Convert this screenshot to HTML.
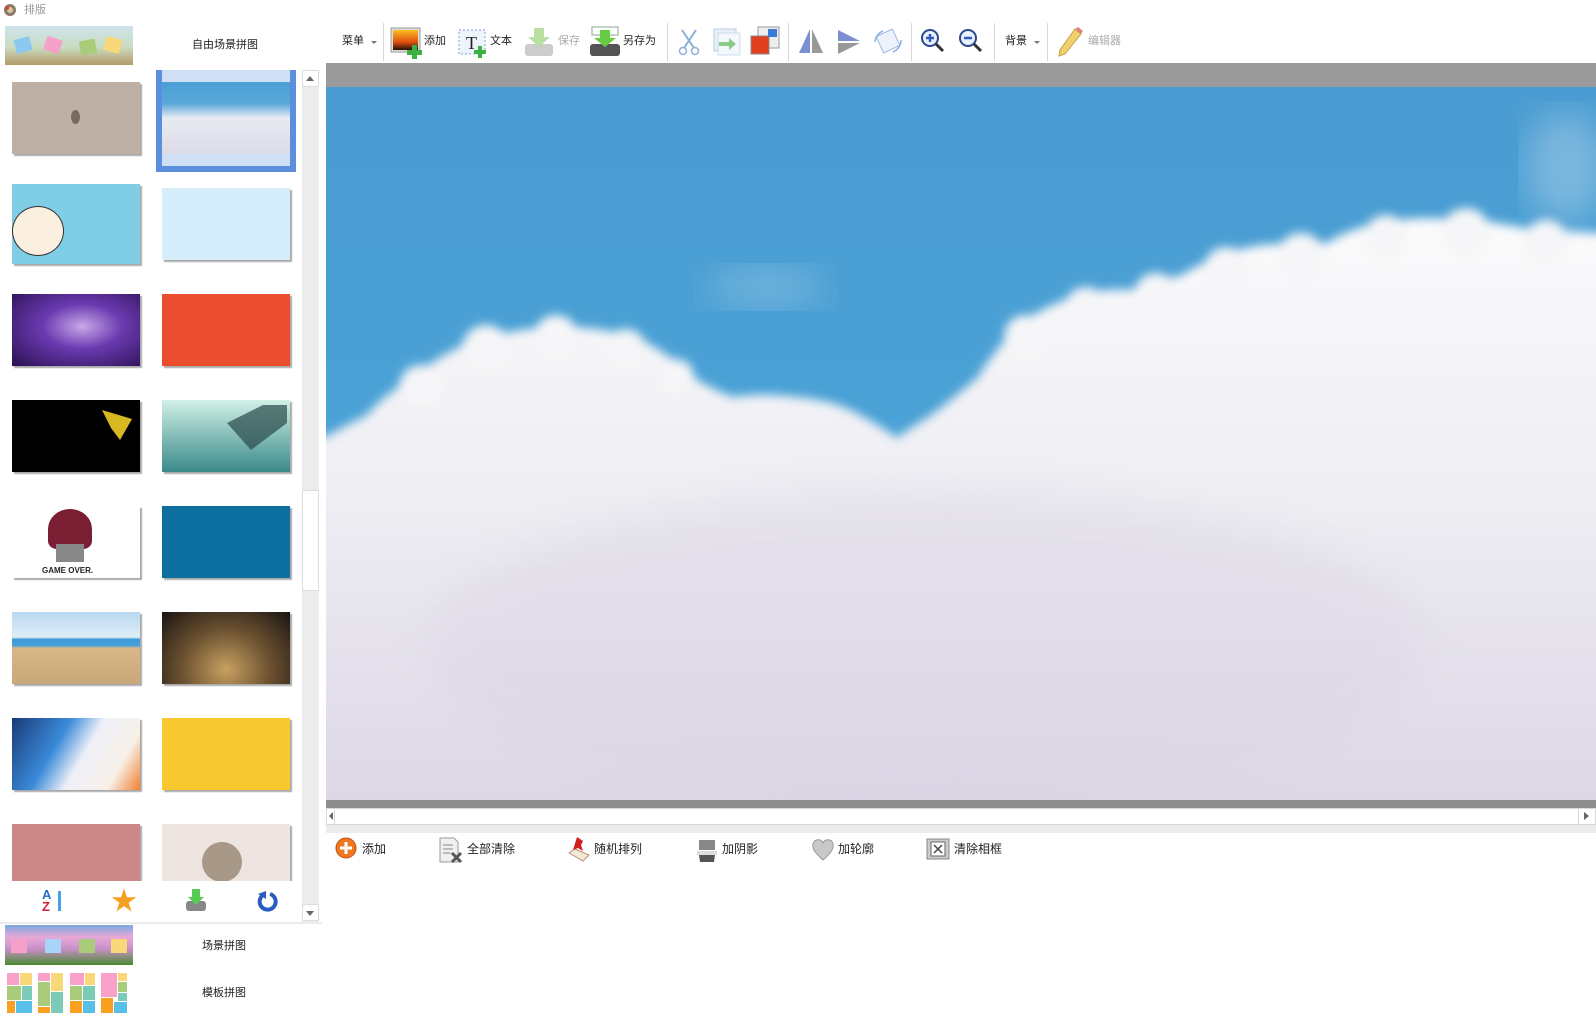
<!DOCTYPE html>
<html><head><meta charset="utf-8">
<style>
*{margin:0;padding:0;box-sizing:border-box}
body{width:1596px;height:1015px;overflow:hidden;background:#fff;position:relative;font-family:"Liberation Sans","Noto Sans CJK SC",sans-serif;font-size:12px;color:#222}
.a{position:absolute}
.t{position:absolute;white-space:nowrap;line-height:14px;font-size:12px}
.th{position:absolute;width:128px;height:72px;box-shadow:2px 2px 1px #aaa}
.sep{position:absolute;top:23px;width:1px;height:38px;background:#d8d8d8}
</style></head><body>

<svg class="a" style="left:2px;top:2px" width="16" height="16"><circle cx="8" cy="8" r="6" fill="#8a7a6a"/><circle cx="8" cy="8" r="3" fill="#d9c9a0"/><circle cx="5" cy="6" r="2" fill="#c44"/></svg>
<div class="t" style="left:24px;top:3px;color:#999;font-size:11px">排版</div>

<div class="a" style="left:5px;top:26px;width:128px;height:39px;background:linear-gradient(#cfe4ee,#c9dcc0 55%,#b49a6a);overflow:hidden">
 <div class="a" style="left:10px;top:12px;width:16px;height:14px;background:#8cc8ef;transform:rotate(-15deg)"></div>
 <div class="a" style="left:40px;top:12px;width:16px;height:14px;background:#f4a0c8;transform:rotate(20deg)"></div>
 <div class="a" style="left:75px;top:14px;width:16px;height:14px;background:#a8cc7a;transform:rotate(-10deg)"></div>
 <div class="a" style="left:100px;top:12px;width:16px;height:14px;background:#f8d878;transform:rotate(15deg)"></div>
</div>
<div class="t" style="left:192px;top:38px;font-size:11px">自由场景拼图</div>

<div class="a" style="left:156px;top:70px;width:140px;height:102px;background:#5b8fdd"></div>
<div class="a" style="left:162px;top:70px;width:128px;height:96px;background:#cfdff5"></div>
<div class="a" style="left:162px;top:82px;width:128px;height:72px;background:linear-gradient(#4a9fd4 0%,#5aa8da 30%,#e8eaf2 50%,#dcdce8);"></div>

<div class="th" style="left:12px;top:82px;background:#bfb0a6"><div class="a" style="left:59px;top:28px;width:9px;height:14px;border-radius:50%;background:#7a6a5e"></div></div>
<div class="th" style="left:12px;top:184px;height:80px;background:#80cde6"><div class="a" style="left:0;top:22px;width:52px;height:50px;border-radius:50%;background:#fbefe0;border:1px solid #333"></div></div>
<div class="th" style="left:162px;top:188px;background:#d6eefb"></div>
<div class="th" style="left:12px;top:294px;background:radial-gradient(ellipse at 55% 45%,#c8a8e8,#6a3ab0 40%,#2a1050)"></div>
<div class="th" style="left:162px;top:294px;background:#ea4e2e"></div>
<div class="th" style="left:12px;top:400px;background:#000"><div class="a" style="left:90px;top:10px;width:30px;height:30px;background:#d8b820;clip-path:polygon(0 0,100% 30%,60% 100%,30% 60%)"></div></div>
<div class="th" style="left:162px;top:400px;background:linear-gradient(#d0f0e6,#3a8a8a)"><div class="a" style="left:65px;top:5px;width:60px;height:45px;background:#2a4a4a;opacity:.7;clip-path:polygon(0 40%,60% 0,100% 0,100% 40%,40% 100%)"></div></div>
<div class="th" style="left:12px;top:506px;background:#fff"><div class="a" style="left:36px;top:3px;width:44px;height:40px;border-radius:50% 50% 20% 20%;background:#7a1e34"></div><div class="a" style="left:44px;top:38px;width:28px;height:18px;background:#888"></div><div class="t" style="left:30px;top:58px;font-size:8px;font-weight:bold">GAME OVER.</div></div>
<div class="th" style="left:162px;top:506px;background:#0d6ea0"></div>
<div class="th" style="left:12px;top:612px;background:linear-gradient(#b8d8f0,#e0eef8 35%,#3a9ad8 38%,#4aa0d8 47%,#d8b888 50%,#c8a878)"></div>
<div class="th" style="left:162px;top:612px;background:radial-gradient(ellipse at 50% 80%,#c8a060,#6a5030 50%,#1a1410)"></div>
<div class="th" style="left:12px;top:718px;background:linear-gradient(120deg,#1a3a78 0%,#3a8ad8 35%,#eef0f8 55%,#f8f0e8 80%,#f08030)"></div>
<div class="th" style="left:162px;top:718px;background:#f7c830"></div>
<div class="th" style="left:12px;top:824px;height:57px;background:#cc8888"></div>
<div class="th" style="left:162px;top:824px;height:57px;background:#eee4e0"><div class="a" style="left:40px;top:18px;width:40px;height:40px;border-radius:50%;background:#a89888"></div></div>
<div class="a" style="left:0;top:881px;width:300px;height:40px;background:#fff"></div>

<div class="t" style="left:42px;top:889px;font-size:13px;font-weight:bold;color:#2a6ac8;line-height:12px">A<br><span style="color:#d02040">Z</span></div>
<div class="a" style="left:58px;top:891px;width:3px;height:20px;background:#4aa0e8"></div>
<div class="t" style="left:111px;top:887px;font-size:26px;color:#f5a020;line-height:28px">★</div>
<svg class="a" style="left:184px;top:887px" width="24" height="26"><rect x="2" y="14" width="20" height="10" rx="3" fill="#888"/><path d="M8 2h8v8h4l-8 8-8-8h4z" fill="#5c5"/></svg>
<svg class="a" style="left:256px;top:890px" width="24" height="22"><path d="M6 6 A8 8 0 1 0 14 4" fill="none" stroke="#2a5cc0" stroke-width="4"/><path d="M2 4l8-3 0 8z" fill="#2a5cc0"/></svg>

<div class="a" style="left:302px;top:70px;width:17px;height:852px;background:#ececec"></div>
<div class="a" style="left:302px;top:70px;width:17px;height:17px;background:#fff;border:1px solid #ddd"></div>
<div class="a" style="left:306px;top:76px;border:4px solid transparent;border-bottom:5px solid #666;border-top:0"></div>
<div class="a" style="left:302px;top:490px;width:17px;height:101px;background:#fff;border:1px solid #ddd"></div>
<div class="a" style="left:302px;top:904px;width:17px;height:17px;background:#fff;border:1px solid #ddd"></div>
<div class="a" style="left:306px;top:911px;border:4px solid transparent;border-top:5px solid #666;border-bottom:0"></div>
<div class="a" style="left:0;top:922px;width:322px;height:2px;background:#ececec"></div>

<div class="a" style="left:5px;top:925px;width:128px;height:40px;background:linear-gradient(#7aa8e0,#e8a8d8 30%,#c890c8 60%,#4a8a30)"><div class="a" style="left:6px;top:14px;width:16px;height:14px;background:#f4a0c8"></div><div class="a" style="left:40px;top:14px;width:16px;height:14px;background:#a8d4f8"></div><div class="a" style="left:74px;top:14px;width:16px;height:14px;background:#a8cc7a"></div><div class="a" style="left:106px;top:14px;width:16px;height:14px;background:#f8d878"></div></div>
<div class="t" style="left:202px;top:939px;font-size:11px">场景拼图</div>
<svg class="a" style="left:7px;top:973px" width="124" height="40">
<g><rect x="0" y="0" width="12" height="12" fill="#f8a0c8"/><rect x="13" y="0" width="12" height="12" fill="#f8d878"/><rect x="0" y="13" width="14" height="14" fill="#a8cc7a"/><rect x="15" y="13" width="10" height="14" fill="#7ccab8"/><rect x="0" y="28" width="8" height="12" fill="#f8a020"/><rect x="9" y="28" width="16" height="12" fill="#58c0e8"/></g>
<g transform="translate(31,0)"><rect x="0" y="0" width="12" height="8" fill="#f8a0c8"/><rect x="13" y="0" width="12" height="18" fill="#f8d878"/><rect x="0" y="9" width="12" height="24" fill="#a8cc7a"/><rect x="13" y="19" width="12" height="21" fill="#7ccab8"/><rect x="0" y="34" width="12" height="6" fill="#f8a020"/></g>
<g transform="translate(63,0)"><rect x="0" y="0" width="14" height="12" fill="#f8a0c8"/><rect x="15" y="0" width="10" height="12" fill="#f8d878"/><rect x="0" y="13" width="12" height="14" fill="#a8cc7a"/><rect x="13" y="13" width="12" height="14" fill="#7ccab8"/><rect x="0" y="28" width="12" height="12" fill="#f8a020"/><rect x="13" y="28" width="12" height="12" fill="#58c0e8"/></g>
<g transform="translate(94,0)"><rect x="0" y="0" width="16" height="24" fill="#f8a0c8"/><rect x="17" y="0" width="9" height="8" fill="#f8d878"/><rect x="17" y="9" width="9" height="10" fill="#a8cc7a"/><rect x="17" y="20" width="9" height="8" fill="#7ccab8"/><rect x="0" y="25" width="12" height="15" fill="#f8a020"/><rect x="13" y="29" width="13" height="11" fill="#58c0e8"/></g>
</svg>
<div class="t" style="left:202px;top:986px;font-size:11px">模板拼图</div>

<div class="t" style="left:342px;top:34px;font-size:11px">菜单</div>
<div class="a" style="left:371px;top:41px;border:3px solid transparent;border-top:3px solid #777"></div>
<div class="sep" style="left:383px"></div>
<svg class="a" style="left:390px;top:27px" width="34" height="32"><defs><linearGradient id="sun" x1="0" y1="0" x2="0" y2="1"><stop offset="0" stop-color="#f8c020"/><stop offset=".6" stop-color="#e05010"/><stop offset="1" stop-color="#201008"/></linearGradient></defs><rect x="1" y="1" width="29" height="24" fill="#ddd" stroke="#999"/><rect x="3" y="3" width="25" height="20" fill="url(#sun)"/><path d="M22 18h5v5h5v5h-5v5h-5v-5h-5v-5h5z" fill="#3cb043"/></svg>
<div class="t" style="left:424px;top:34px;font-size:11px">添加</div>
<svg class="a" style="left:457px;top:27px" width="32" height="32"><rect x="2" y="3" width="26" height="24" fill="#eef4fc" stroke="#7aa0d8" stroke-dasharray="2 2"/><text x="9" y="22" font-family="Liberation Serif" font-size="18" fill="#222">T</text><path d="M21 19h4v4h4v4h-4v4h-4v-4h-4v-4h4z" fill="#3cb043"/></svg>
<div class="t" style="left:490px;top:34px;font-size:11px">文本</div>
<svg class="a" style="left:524px;top:26px" width="30" height="32"><rect x="1" y="18" width="28" height="12" rx="3" fill="#ccc"/><path d="M10 2h10v9h6l-11 10-11-10h6z" fill="#b8e0a0"/></svg>
<div class="t" style="left:558px;top:34px;font-size:11px;color:#aaa">保存</div>
<svg class="a" style="left:589px;top:26px" width="32" height="32"><rect x="1" y="18" width="30" height="12" rx="3" fill="#555"/><rect x="3" y="1" width="26" height="8" fill="#fff" stroke="#8a8"/><path d="M11 4h10v8h6l-11 9-11-9h6z" fill="#6c4"/></svg>
<div class="t" style="left:623px;top:34px;font-size:11px">另存为</div>
<div class="sep" style="left:667px"></div>
<svg class="a" style="left:678px;top:28px" width="22" height="28"><path d="M4 2l12 18M18 2l-12 18" stroke="#8ab0d8" stroke-width="2"/><circle cx="5" cy="23" r="3.5" fill="none" stroke="#8ab0d8" stroke-width="1.5"/><circle cx="17" cy="23" r="3.5" fill="none" stroke="#8ab0d8" stroke-width="1.5"/></svg>
<svg class="a" style="left:713px;top:28px" width="28" height="28"><rect x="1" y="1" width="22" height="22" fill="#e8f0f8" stroke="#bcd"/><rect x="5" y="5" width="22" height="22" fill="#f4f8fc" stroke="#cde"/><path d="M6 14h10v-4l7 6-7 6v-4h-10z" fill="#8c8"/></svg>
<svg class="a" style="left:750px;top:26px" width="30" height="30"><rect x="8" y="1" width="21" height="21" fill="#eee" stroke="#999"/><rect x="1" y="10" width="18" height="18" fill="#e04020" stroke="#888"/><rect x="18" y="3" width="9" height="8" fill="#3a7ad8"/></svg>
<div class="sep" style="left:788px"></div>
<svg class="a" style="left:798px;top:28px" width="26" height="26"><path d="M12 1v24h-11z" fill="#7a90d0"/><path d="M14 1v24h11z" fill="#999"/></svg>
<svg class="a" style="left:837px;top:29px" width="24" height="26"><path d="M1 1l22 11h-22z" fill="#7a90d0"/><path d="M1 14h22l-22 11z" fill="#999"/></svg>
<svg class="a" style="left:872px;top:28px" width="32" height="28"><rect x="7" y="4" width="18" height="18" fill="#eef3fb" stroke="#9ab8e0" transform="rotate(-25 16 13)"/><path d="M3 14a13 13 0 0 1 8-11M29 12a13 13 0 0 1-8 12" fill="none" stroke="#8ab0e0" stroke-width="1.5"/></svg>
<div class="sep" style="left:911px"></div>
<svg class="a" style="left:920px;top:28px" width="26" height="28"><circle cx="10" cy="10" r="8" fill="#e8f0fb" stroke="#2a4a90" stroke-width="2"/><path d="M6 10h8M10 6v8" stroke="#2a5cc0" stroke-width="2.5"/><path d="M16 16l7 7" stroke="#333" stroke-width="3"/></svg>
<svg class="a" style="left:958px;top:28px" width="26" height="28"><circle cx="10" cy="10" r="8" fill="#e8f0fb" stroke="#2a4a90" stroke-width="2"/><path d="M6 10h8" stroke="#2a5cc0" stroke-width="2.5"/><path d="M16 16l7 7" stroke="#333" stroke-width="3"/></svg>
<div class="sep" style="left:994px"></div>
<div class="t" style="left:1005px;top:34px;font-size:11px">背景</div>
<div class="a" style="left:1034px;top:41px;border:3px solid transparent;border-top:3px solid #777"></div>
<div class="sep" style="left:1047px"></div>
<svg class="a" style="left:1057px;top:27px" width="26" height="30"><path d="M18 2l6 5-16 20-6 2 1-6z" fill="#f0d070" stroke="#c8a040"/><path d="M18 2l6 5 2-3-5-4z" fill="#e08080"/></svg>
<div class="t" style="left:1088px;top:34px;font-size:11px;color:#aaa">编辑器</div>

<div class="a" style="left:326px;top:63px;width:1270px;height:24px;background:#9a9a9a"></div>
<svg class="a" style="left:326px;top:87px" width="1270" height="713" viewBox="0 0 1270 713">
<defs>
<linearGradient id="sky" x1="0" y1="0" x2="0" y2="1"><stop offset="0" stop-color="#4a9cd2"/><stop offset=".5" stop-color="#4aa2d6"/><stop offset="1" stop-color="#5aaada"/></linearGradient>
<linearGradient id="cl" x1="0" y1="0" x2="0" y2="1"><stop offset="0" stop-color="#fbfbfc"/><stop offset=".45" stop-color="#eeeef3"/><stop offset="1" stop-color="#dcd5e5"/></linearGradient>
<filter id="bl"><feGaussianBlur stdDeviation="5"/></filter>
<filter id="bl2"><feGaussianBlur stdDeviation="18"/></filter>
</defs>
<rect width="1270" height="713" fill="url(#sky)"/>
<ellipse cx="1240" cy="80" rx="40" ry="55" fill="#dceaf4" opacity=".35" filter="url(#bl2)"/>
<ellipse cx="440" cy="200" rx="60" ry="20" fill="#cfe2f0" opacity=".3" filter="url(#bl2)"/>
<g filter="url(#bl)" fill="#f6f6f8">
<path fill="url(#cl)" d="M-20 350 L0 350 C20 338 41 328 41 328 C60 305 82 295 82 295 C110 268 143 256 143 256 C180 242 224 240 224 240 C270 238 306 249 306 249 C340 262 367 290 367 290 C390 305 408 310 408 310 C440 305 469 310 469 310 C500 312 520 321 520 321 C550 335 571 351 571 351 C585 340 601 331 601 331 C630 310 652 290 652 290 C670 260 693 239 693 239 C720 215 754 209 754 209 C780 200 805 203 805 203 C830 195 856 188 856 188 C875 175 897 168 897 168 C930 155 958 157 958 157 C980 152 999 157 999 157 C1025 140 1050 137 1050 137 C1090 128 1122 132 1122 132 C1160 132 1203 142 1203 142 L1290 147 L1290 730 L-20 730 Z"/>
<circle cx="95" cy="300" r="22"/><circle cx="160" cy="262" r="24"/><circle cx="230" cy="250" r="22"/><circle cx="300" cy="262" r="20"/><circle cx="350" cy="290" r="18"/>
<circle cx="700" cy="250" r="22"/><circle cx="760" cy="222" r="22"/><circle cx="830" cy="208" r="22"/><circle cx="900" cy="182" r="22"/><circle cx="975" cy="170" r="24"/><circle cx="1060" cy="150" r="22"/><circle cx="1140" cy="145" r="24"/><circle cx="1220" cy="155" r="22"/>
</g>
<ellipse cx="600" cy="560" rx="500" ry="160" fill="#d8d0e2" opacity=".35" filter="url(#bl2)"/>
</svg>
<div class="a" style="left:326px;top:800px;width:1270px;height:8px;background:#8e8e8e"></div>
<div class="a" style="left:326px;top:808px;width:1270px;height:17px;background:#fff;border:1px solid #d8d8d8"></div>
<div class="a" style="left:326px;top:808px;width:9px;height:17px;border-right:1px solid #d8d8d8"></div>
<div class="a" style="left:329px;top:812px;border:4px solid transparent;border-right:4px solid #666;border-left:0"></div>
<div class="a" style="left:1578px;top:808px;width:18px;height:17px;background:#fff;border:1px solid #d8d8d8"></div>
<div class="a" style="left:1584px;top:812px;border:4px solid transparent;border-left:5px solid #666;border-right:0"></div>
<div class="a" style="left:326px;top:825px;width:1270px;height:8px;background:#ececec"></div>

<svg class="a" style="left:335px;top:837px" width="24" height="24"><circle cx="11" cy="11" r="10" fill="#f07820" stroke="#c05010"/><path d="M5 11h12M11 5v12" stroke="#fff" stroke-width="3"/></svg>
<div class="t" style="left:362px;top:842px;font-size:12px">添加</div>
<svg class="a" style="left:438px;top:837px" width="26" height="28"><path d="M2 1h14l4 4v20h-18z" fill="#f0f0f0" stroke="#999"/><path d="M5 8h10M5 12h10M5 16h8" stroke="#888"/><path d="M14 16l9 9M23 16l-9 9" stroke="#555" stroke-width="3"/></svg>
<div class="t" style="left:467px;top:842px;font-size:12px">全部清除</div>
<svg class="a" style="left:567px;top:835px" width="24" height="28"><path d="M2 18l14 8 6-6-14-6z" fill="#f4e8d8" stroke="#b89070"/><path d="M10 2l6 4-2 4 2 6-5-3-5 2z" fill="#d02020"/></svg>
<div class="t" style="left:594px;top:842px;font-size:12px">随机排列</div>
<svg class="a" style="left:696px;top:838px" width="22" height="26"><path d="M3 2h16v10h-16z" fill="#888"/><path d="M1 13h20v4h-20z" fill="#ddd"/><path d="M3 17h16l-1 7h-14z" fill="#555"/></svg>
<div class="t" style="left:722px;top:842px;font-size:12px">加阴影</div>
<svg class="a" style="left:812px;top:838px" width="22" height="24"><path d="M11 22 C2 14 0 10 1 6 C2 1 9 0 11 5 C13 0 20 1 21 6 C22 10 20 14 11 22z" fill="#c8c8c8" stroke="#999"/></svg>
<div class="t" style="left:838px;top:842px;font-size:12px">加轮廓</div>
<svg class="a" style="left:926px;top:838px" width="24" height="22"><rect x="1" y="1" width="22" height="20" fill="#ccc" stroke="#888"/><rect x="5" y="4" width="14" height="14" fill="#fff" stroke="#666"/><path d="M8 7l8 8M16 7l-8 8" stroke="#444" stroke-width="1.5"/></svg>
<div class="t" style="left:954px;top:842px;font-size:12px">清除相框</div>

</body></html>
